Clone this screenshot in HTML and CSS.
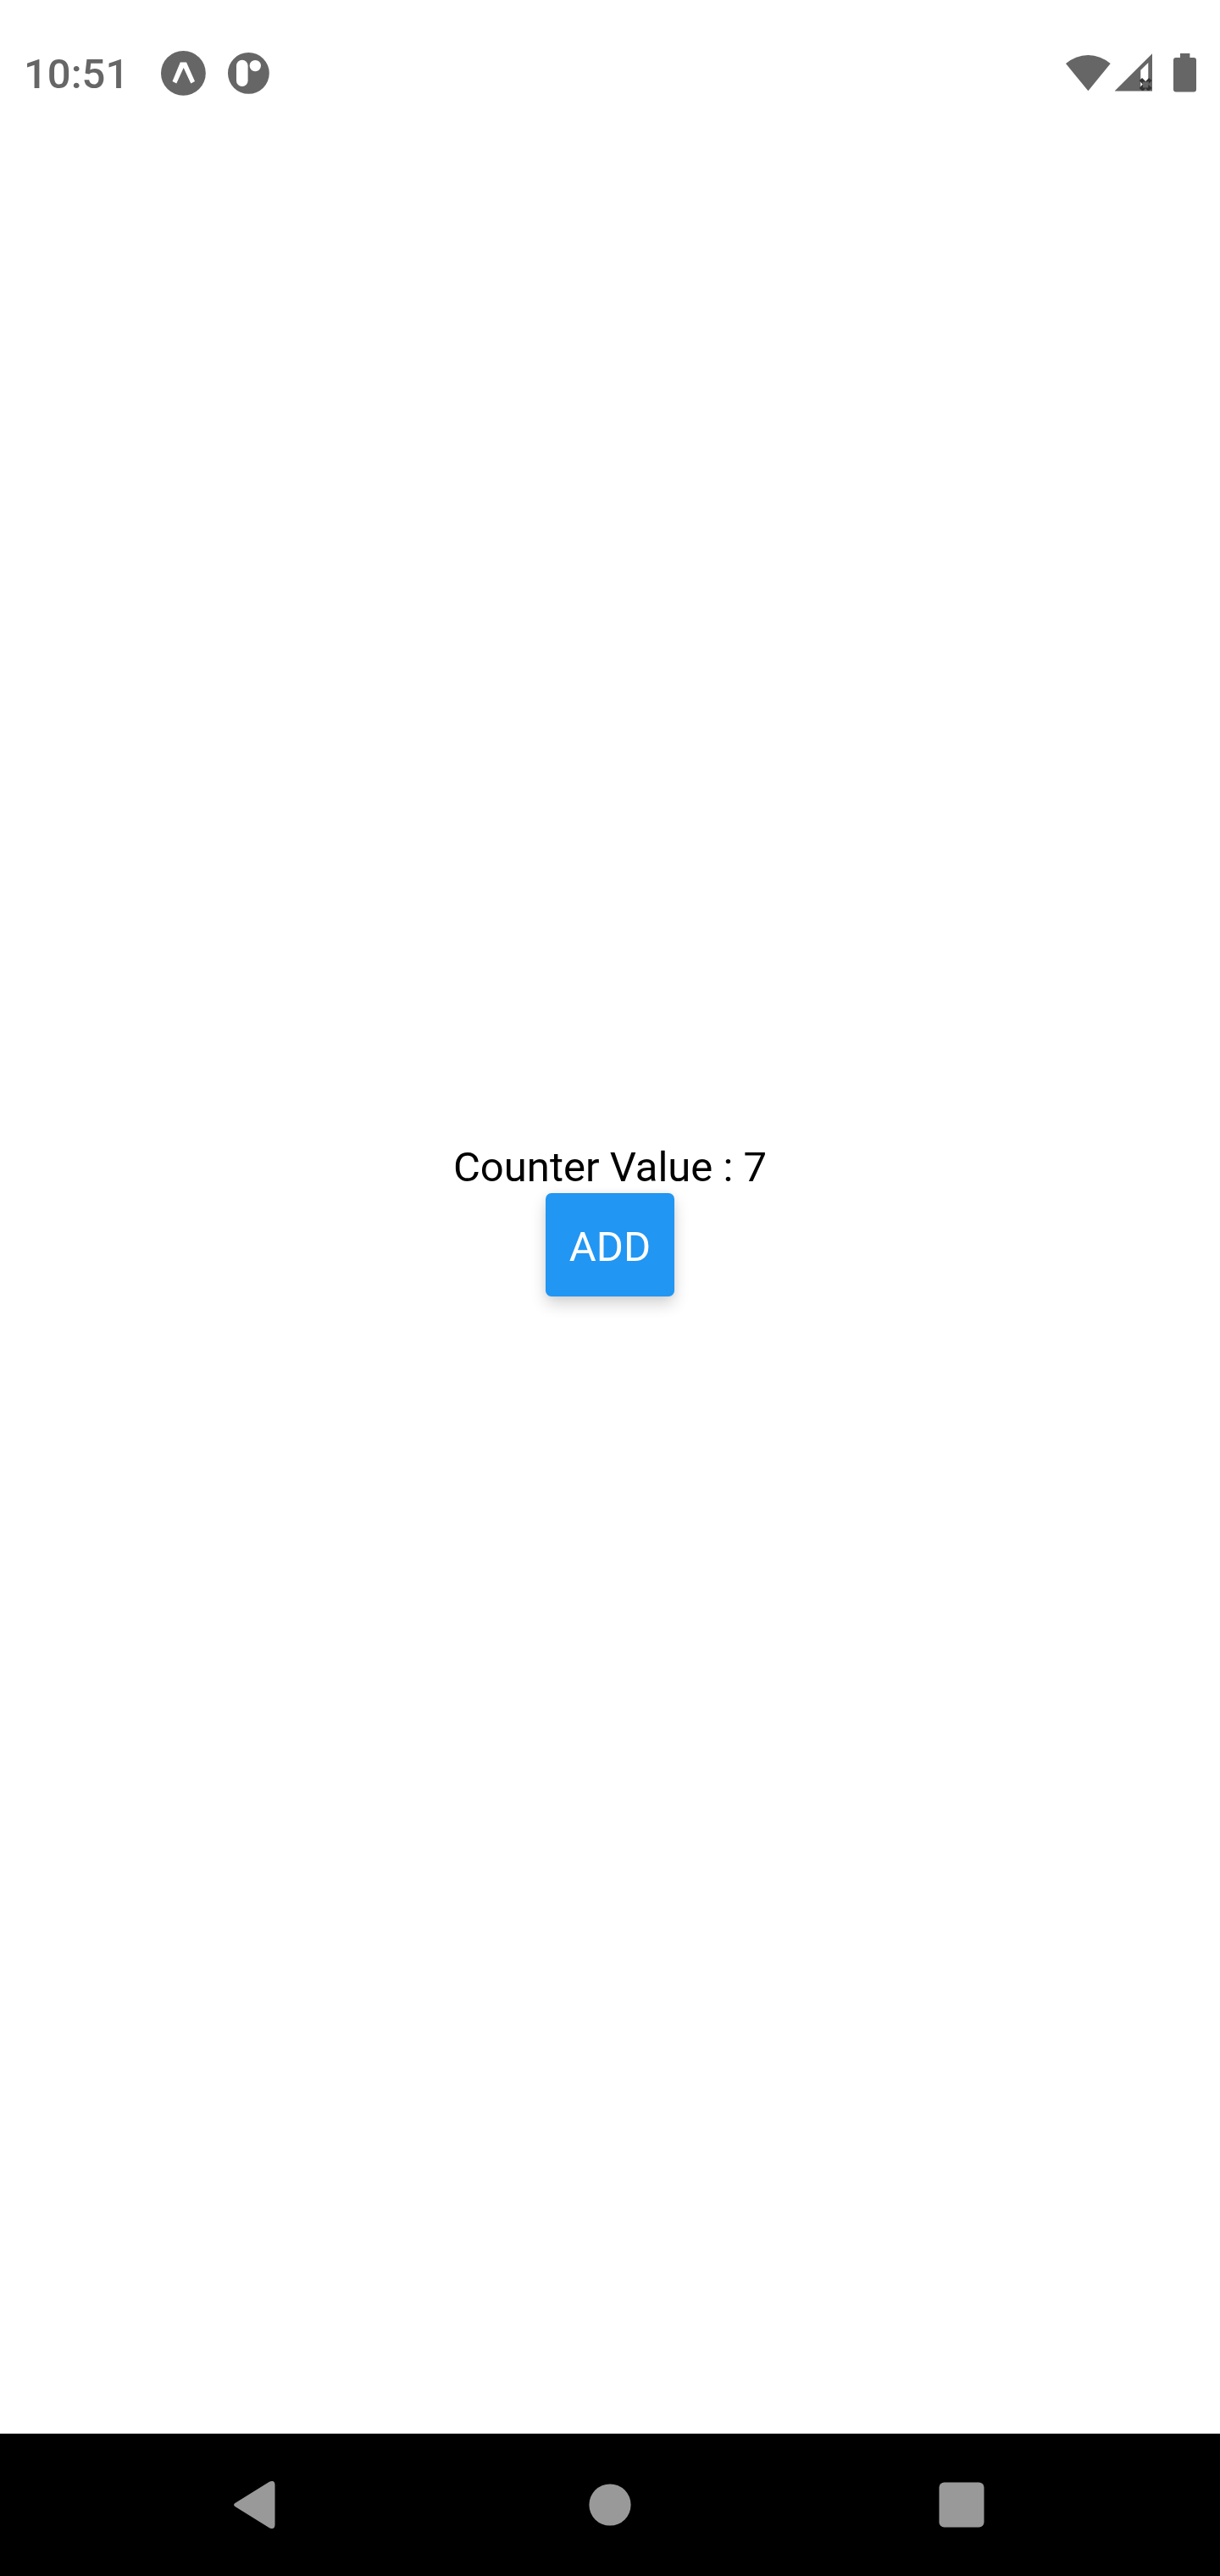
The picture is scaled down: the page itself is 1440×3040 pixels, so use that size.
FILE: index.html
```html
<!DOCTYPE html>
<html lang="en">
<head>
<meta charset="utf-8">
<title>Counter</title>
<link rel="stylesheet" href="styles.css">
</head>
<body>
<div class="screen">
  <header class="status-bar">
    <div class="status-left">
      <span class="clock">10:51</span>
      <svg class="expo-icon" viewBox="0 0 54 54"><circle cx="26.4" cy="26.4" r="26.4"/><path class="light" d="M22.800 13.600H30L40 36 35.300 38.500 26.700 20 18.300 38.500 13.500 36z"/></svg>
      <svg class="app-icon" viewBox="0 0 50 50"><circle cx="24.400" cy="24.400" r="24.400"/><rect class="light" x="10" y="8.700" width="13.600" height="31.300" rx="6.800"/><circle class="light" cx="32.300" cy="15.600" r="6.700"/></svg>
    </div>
    <div class="status-right">
      <svg class="wifi-icon" viewBox="0 0 54 48"><path d="M0 12A40 40 0 0 1 52.700 12L26.400 44.300z"/></svg>
      <svg class="signal-icon" viewBox="0 0 46 48"><path fill-rule="evenodd" d="M-.3 44.400L44 .2V44.400zM30.300 19.700V40H39.300V11z"/><path class="cross" d="M28.600 32l3.500-3 4 4 4-4 3.500 3-4.200 4.500 4.200 4.500-3.500 3h-1.500l-2.500-3-2.500 3h-1.500l-3.500-3 4.200-4.500z"/><path d="M32.600 33.500h7.500l-1 7h-6z"/></svg>
      <svg class="battery-icon" viewBox="0 0 28 48"><path d="M8 0h11.400v5H24q3 0 3 3V42.500q0 3-3 3H3q-3 0-3-3V8q0-3 3-3h5z"/></svg>
    </div>
  </header>
  <main class="content">
    <p class="counter">Counter Value : 7</p>
    <button class="add-button" type="button">ADD</button>
  </main>
  <nav class="nav-bar">
    <svg class="nav-icon" viewBox="0 0 60 60"><path d="M4 27L43 2.800Q49 0 49.500 6V54Q49 60 43 57.200L4 33Q-2 30 4 27z"/></svg>
    <svg class="nav-icon" viewBox="0 0 60 60"><circle cx="30" cy="30" r="24.600"/></svg>
    <svg class="nav-icon" viewBox="0 0 60 60"><rect x="3.500" y="3.500" width="53" height="53" rx="6"/></svg>
  </nav>
</div>
</body>
</html>
```
FILE: styles.css
```css
* { box-sizing: border-box; }
body { margin: 0; background: #fff; font-family: Roboto, sans-serif; font-size: 49px; }
.screen { display: flex; flex-direction: column; width: 1440px; height: 3040px; }
svg { display: block; flex: none; }
.status-bar { display: flex; justify-content: space-between; height: 168px; padding: 60px 28px 0; color: #666; fill: #666; }
.status-left, .status-right { display: flex; align-items: flex-start; }
.clock { width: 162px; line-height: 56px; font-weight: 500; }
.light { fill: #fff; }
.expo-icon { width: 54px; height: 54px; }
.app-icon { width: 50px; height: 50px; margin: 2px 0 0 25px; }
.status-right { padding-top: 3px; }
.wifi-icon { width: 54px; height: 48px; }
.signal-icon { width: 46px; height: 48px; margin-left: 4px; }
.battery-icon { width: 28px; height: 48px; margin: 0 -1px 0 23px; }
.cross { fill: #333; }
.content { flex: 1; display: flex; flex-direction: column; align-items: center; padding-top: 1177px; }
.counter { margin: 0; height: 63px; line-height: 66px; color: #000; }
.add-button { width: 152px; height: 122px; padding: 4px 0 0; border: 0; border-radius: 7px; background: #2196f3; color: #fff; font: inherit; box-shadow: 0 9px 18px rgba(0, 0, 0, .17), 0 0 8px rgba(0, 0, 0, .06); }
.nav-bar { display: flex; justify-content: space-between; align-items: center; height: 168px; padding: 0 275px; background: #000; fill: #999; }
.nav-icon { width: 60px; height: 60px; }
```
